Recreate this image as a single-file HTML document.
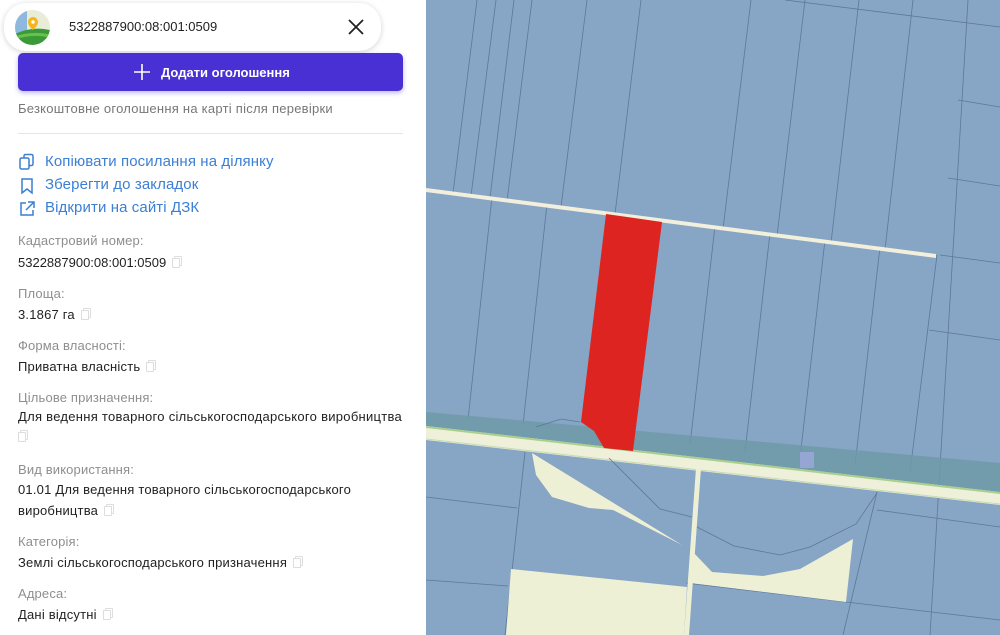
<!DOCTYPE html>
<html><head><meta charset="utf-8"><style>
*{margin:0;padding:0;box-sizing:border-box}
body{width:1000px;height:635px;overflow:hidden;position:relative;background:#fff;font-family:"Liberation Sans","DejaVu Sans",sans-serif}
.t{position:absolute;left:18px;white-space:nowrap;font-size:13px;line-height:16px}
.l{color:#8e8e8e;letter-spacing:0.15px}
.v{color:#222;letter-spacing:0.2px}
.a{color:#3b7fd4;font-size:15px;left:45px;line-height:18px;letter-spacing:0.1px}
.c{display:inline-block;width:8px;height:10px;border:1px solid #ddd;border-radius:1px;margin-left:6px;vertical-align:-1px;box-shadow:2px -2px 0 -1px #fff,2px -2px 0 0 #ddd}
svg.ic{position:absolute;left:18px}
</style></head><body>
<svg style="position:absolute;left:426px;top:0" width="574" height="635" viewBox="426 0 574 635">
<rect x="426" y="0" width="574" height="635" fill="#87a5c4"/>
<g stroke="#5d789a" stroke-width="0.8" fill="none">
<line x1="477" y1="0" x2="453" y2="193"/><line x1="496" y1="0" x2="471" y2="196"/><line x1="514" y1="0" x2="490" y2="198"/><line x1="532" y1="0" x2="507" y2="201"/>
<line x1="587" y1="0" x2="561" y2="207"/><line x1="641" y1="0" x2="615" y2="214"/><line x1="751" y1="0" x2="723" y2="229"/><line x1="805" y1="0" x2="777" y2="236"/>
<line x1="859" y1="0" x2="831" y2="243"/><line x1="913" y1="0" x2="885" y2="250"/><line x1="968" y1="0" x2="930" y2="635"/>
<line x1="785" y1="0" x2="1000" y2="27"/><line x1="958" y1="100" x2="1000" y2="107"/><line x1="948" y1="178" x2="1000" y2="186"/><line x1="940" y1="255" x2="1000" y2="263"/><line x1="929" y1="330" x2="1000" y2="340"/>
<line x1="492" y1="197" x2="468" y2="420"/><line x1="547" y1="204" x2="523" y2="425"/><line x1="715" y1="226" x2="690" y2="445"/><line x1="770" y1="233" x2="745" y2="452"/>
<line x1="825" y1="240" x2="800" y2="458"/><line x1="880" y1="247" x2="855" y2="465"/><line x1="937" y1="255" x2="910" y2="472"/>
<line x1="525" y1="452" x2="505" y2="635"/><line x1="877" y1="492" x2="843" y2="635"/>
<line x1="426" y1="497" x2="517" y2="508"/><line x1="426" y1="580" x2="508" y2="586"/><line x1="877" y1="510" x2="1000" y2="527"/><line x1="846" y1="602" x2="1000" y2="620"/><line x1="686" y1="583" x2="846" y2="602"/>
</g>
<polygon points="426,412 1000,463 1000,493 426,427" fill="#6e99a8" opacity="0.85"/>
<rect x="800" y="452" width="14" height="16" fill="#96a6d2"/>
<polygon points="426,426 1000,492 1000,505 426,440" fill="#eef0da"/>
<polyline points="426,427 1000,493" stroke="#a9cf8f" stroke-width="2" fill="none"/>
<polyline points="426,439 1000,504" stroke="#c7dab0" stroke-width="1" fill="none"/>
<polygon points="426,188 936,254 936,258 426,192" fill="#f2f0dc"/>
<polygon points="532,453 536,475 552,497 589,508 613,510 682,545" fill="#eef0d6"/>
<polygon points="511,569 687,587 684,635 506,635" fill="#eef0d6"/>
<polygon points="693,552 712,572 763,576 800,569 853,539 846,602 690,583" fill="#eef0d6"/>
<polygon points="696,468 701,468 689,635 684,635" fill="#eef0d6"/>
<g stroke="#5d789a" stroke-width="0.8" fill="none">
<polyline points="536,427 561,419 580,422"/>
<polyline points="609,458 660,509 692,517"/>
<polyline points="697,527 734,546 780,555 810,547 856,524 877,493"/>
</g>
<polygon points="606,214 662,222 633,451 604,448 594,431 581,422" fill="#de2420"/>
</svg>

<div style="position:absolute;left:0;top:0;width:426px;height:635px;background:#fff"></div>
<div style="position:absolute;left:4px;top:3px;width:377px;height:48px;border-radius:22px;background:#fff;box-shadow:0 1px 6px rgba(0,0,0,.18)"></div>
<svg style="position:absolute;left:15px;top:10px" width="35" height="35" viewBox="0 0 35 35">
<defs><clipPath id="cc"><circle cx="17.5" cy="17.5" r="17.5"/></clipPath></defs>
<g clip-path="url(#cc)"><rect width="35" height="35" fill="#e9ecd6"/><rect width="12" height="35" fill="#8fb8de"/><path d="M0 24 Q17 16 35 20 L35 35 L0 35Z" fill="#3a9a3a"/><path d="M0 28 Q17 22 35 26" stroke="#69c04a" stroke-width="3" fill="none"/></g>
<path d="M18 7a5 5 0 0 1 5 5c0 4-5 8-5 8s-5-4-5-8a5 5 0 0 1 5-5z" fill="#f3b61c"/><circle cx="18" cy="12" r="1.8" fill="#fff"/>
</svg>
<div class="t" style="left:69px;top:19px;font-size:13px;color:#222">5322887900:08:001:0509</div>
<svg style="position:absolute;left:347px;top:18px" width="18" height="18"><path d="M2 2L16 16M16 2L2 16" stroke="#222" stroke-width="1.8"/></svg>

<div style="position:absolute;left:18px;top:53px;width:385px;height:38px;border-radius:5px;background:#4830d4;box-shadow:0 2px 5px rgba(72,48,212,.35)"></div>
<svg style="position:absolute;left:134px;top:64px" width="16" height="16"><path d="M8 0V16M0 8H16" stroke="#fff" stroke-width="1.6"/></svg>
<div class="t" style="left:161px;top:65px;color:#fff;font-weight:bold;font-size:13px">Додати оголошення</div>
<div class="t l" style="top:101px;color:#777;letter-spacing:0.25px">Безкоштовне оголошення на карті після перевірки</div>
<div style="position:absolute;left:18px;top:133px;width:385px;height:1px;background:#e6e6e6"></div>

<svg class="ic" style="top:153px" width="18" height="18" fill="none" stroke="#3b7fd4" stroke-width="1.5"><rect x="2" y="5" width="9" height="11" rx="1.5"/><path d="M6 5V3a1.5 1.5 0 0 1 1.5-1.5h6A1.5 1.5 0 0 1 15 3v8a1.5 1.5 0 0 1-1.5 1.5H11"/></svg>
<div class="t a" style="top:153px">Копіювати посилання на ділянку</div>
<svg class="ic" style="top:177px" width="18" height="18" fill="none" stroke="#3b7fd4" stroke-width="1.5"><path d="M4 2h10v14l-5-4-5 4z"/></svg>
<div class="t a" style="top:176px">Зберегти до закладок</div>
<svg class="ic" style="top:200px" width="18" height="18" fill="none" stroke="#3b7fd4" stroke-width="1.5"><path d="M8 3H3v12h12v-5M10 2h6v6M16 2L8 10"/></svg>
<div class="t a" style="top:199px">Відкрити на сайті ДЗК</div>

<div class="t l" style="top:233px">Кадастровий номер:</div>
<div class="t v" style="top:255px;letter-spacing:0">5322887900:08:001:0509<span class="c"></span></div>
<div class="t l" style="top:286px">Площа:</div>
<div class="t v" style="top:307px">3.1867 га<span class="c"></span></div>
<div class="t l" style="top:338px">Форма власності:</div>
<div class="t v" style="top:359px">Приватна власність<span class="c"></span></div>
<div class="t l" style="top:390px">Цільове призначення:</div>
<div class="t v" style="top:409px;letter-spacing:0.28px">Для ведення товарного сільськогосподарського виробництва</div>
<div class="t v" style="top:429px;left:12px"><span class="c"></span></div>
<div class="t l" style="top:462px">Вид використання:</div>
<div class="t v" style="top:482px">01.01 Для ведення товарного сільськогосподарського</div>
<div class="t v" style="top:503px">виробництва<span class="c"></span></div>
<div class="t l" style="top:534px">Категорія:</div>
<div class="t v" style="top:555px">Землі сільськогосподарського призначення<span class="c"></span></div>
<div class="t l" style="top:586px">Адреса:</div>
<div class="t v" style="top:607px">Дані відсутні<span class="c"></span></div>
</body></html>
